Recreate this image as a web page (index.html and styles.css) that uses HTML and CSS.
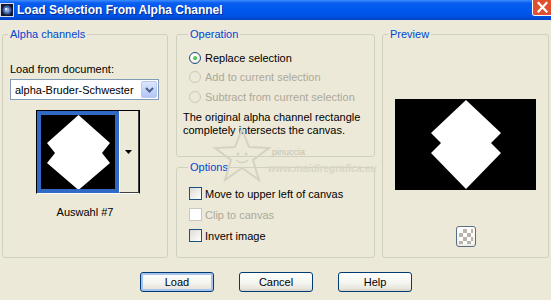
FILE: index.html
```html
<!DOCTYPE html>
<html lang="en">

<head>
  <meta charset="UTF-8">
  <title>Load Selection From Alpha Channel</title>
  <link rel="stylesheet" href="styles.css">
</head>

<body>
  <div class="window">
    <div class="titlebar">
      <svg class="app-icon" width="14" height="14" viewBox="0 0 14 14">
        <rect x="0" y="0" width="14" height="14" fill="#d8dce8"/>
        <rect x="1" y="1" width="12" height="12" fill="#14182a"/>
        <circle cx="7" cy="7" r="4.5" fill="#3e5fa8"/>
        <circle cx="7" cy="7" r="2.5" fill="#8fa6d8"/>
        <circle cx="6" cy="6" r="1" fill="#ffffff"/>
      </svg>
      <div class="title">Load Selection From Alpha Channel</div>
      <div class="close-btn">
        <svg width="18" height="15" viewBox="0 0 18 15">
          <rect width="18" height="15" fill="#e0502e"/>
          <path d="M5.5 3 L13.5 11.5 M13.5 3 L5.5 11.5" stroke="#ffffff" stroke-width="2.2" stroke-linecap="square"/>
        </svg>
      </div>
    </div>

    <div class="dialog">
      <div class="panels">
        <fieldset class="group group-alpha">
          <legend>Alpha channels</legend>
          <div class="field-label">Load from document:</div>
          <div class="combo">
            <span class="combo-text">alpha-Bruder-Schwester</span>
            <span class="combo-btn">
              <svg width="9" height="6" viewBox="0 0 9 6">
                <path d="M1 1 L4.5 4.5 L8 1" fill="none" stroke="#4d6185" stroke-width="2"/>
              </svg>
            </span>
          </div>
          <div class="thumb-picker">
            <div class="thumb">
              <svg width="74" height="74" viewBox="0 0 74 74">
                <polygon points="37.5,0 6,28 14,38 6,48 37.5,75 69,48 61,38 69,28" fill="#ffffff"/>
              </svg>
            </div>
            <div class="thumb-arrow">
              <svg width="7" height="4" viewBox="0 0 7 4">
                <polygon points="0,0 7,0 3.5,4" fill="#000000"/>
              </svg>
            </div>
          </div>
          <div class="thumb-name">Auswahl #7</div>
        </fieldset>

        <div class="middle">
          <fieldset class="group group-operation">
            <legend>Operation</legend>
            <div class="option-row">
              <span class="radio checked"></span>
              <span>Replace selection</span>
            </div>
            <div class="option-row disabled">
              <span class="radio"></span>
              <span>Add to current selection</span>
            </div>
            <div class="option-row disabled">
              <span class="radio"></span>
              <span>Subtract from current selection</span>
            </div>
            <p class="note">The original alpha channel rectangle<br>completely intersects the canvas.</p>
          </fieldset>

          <fieldset class="group group-options">
            <legend>Options</legend>
            <div class="option-row check-row">
              <span class="checkbox"></span>
              <span>Move to upper left of canvas</span>
            </div>
            <div class="option-row check-row disabled">
              <span class="checkbox"></span>
              <span>Clip to canvas</span>
            </div>
            <div class="option-row check-row">
              <span class="checkbox"></span>
              <span>Invert image</span>
            </div>
          </fieldset>
        </div>

        <fieldset class="group group-preview">
          <legend>Preview</legend>
          <div class="preview">
            <svg width="141" height="91" viewBox="0 0 141 91">
              <rect width="141" height="91" fill="#000000"/>
              <polygon points="71,1 36,34 46,44 36,54 71,90 106,54 96,44 106,34" fill="#ffffff"/>
            </svg>
          </div>
          <button class="checker-btn"><span class="checker"></span></button>
        </fieldset>
      </div>

      <div class="buttons">
        <button class="btn default">Load</button>
        <button class="btn">Cancel</button>
        <button class="btn">Help</button>
      </div>
    </div>

    <div class="watermark">
      <svg class="star" width="60" height="58" viewBox="0 0 60 58">
        <polygon points="30,3 37,21 57,22 41,34 47,54 30,42 13,54 19,34 3,22 23,21" fill="none" stroke="#d5d2c1" stroke-width="2"/>
        <circle cx="26" cy="28" r="1.5" fill="#d5d2c1"/>
        <circle cx="34" cy="28" r="1.5" fill="#d5d2c1"/>
        <path d="M24 34 Q30 39 36 34" fill="none" stroke="#d5d2c1" stroke-width="1.5"/>
      </svg>
      <span class="wm-name">pinuccia</span>
      <span class="wm-site">www.maidiregrafica.eu</span>
    </div>
  </div>
</body>

</html>
```

FILE: styles.css
```css
* {
  margin: 0;
  padding: 0;
  box-sizing: border-box;
}

body {
  width: 551px;
  height: 300px;
  overflow: hidden;
  background-color: #ece9d8;
  font-family: "Liberation Sans", Arial, sans-serif;
  font-size: 11px;
  color: #000000;
}

.window {
  position: relative;
  height: 300px;
}

/* title bar */

.titlebar {
  display: flex;
  align-items: center;
  width: 551px;
  height: 20px;
  background: linear-gradient(#3d8cff 0, #0a5ef0 3px, #0058ee 45%, #0052e4 80%, #0442c6 100%);
}

.app-icon {
  flex: none;
}

.title {
  flex: 1 1 auto;
  margin-left: 3px;
  color: #ffffff;
  font-weight: bold;
  font-size: 12px;
  text-shadow: 1px 1px 0 #0a2a8e;
  white-space: nowrap;
}

.close-btn {
  align-self: flex-start;
  flex: none;
  width: 19px;
  height: 16px;
  border-left: 1px solid #ffffff;
  border-bottom: 1px solid #ffffff;
  border-bottom-left-radius: 3px;
  overflow: hidden;
}

.close-btn svg {
  display: block;
}

/* dialog body */

.dialog {
  padding: 8px 2px 0 2px;
}

.panels {
  display: flex;
  height: 230px;
}

.group {
  border: 1px solid #d0d0bf;
  border-radius: 3px;
  min-width: 0;
}

.group legend {
  margin-left: 5px;
  padding: 0 2px;
  color: #0046d5;
  font-size: 11px;
  line-height: 13px;
}

.group-alpha {
  width: 166px;
  display: flex;
  flex-direction: column;
  align-items: center;
}

.middle {
  width: 199px;
  margin: 0 7px 0 8px;
  display: flex;
  flex-direction: column;
  gap: 4px;
}

.group-preview {
  width: 167px;
  display: flex;
  flex-direction: column;
  align-items: center;
}

/* alpha channels */

.field-label {
  align-self: flex-start;
  margin: 21px 0 0 7px;
  line-height: 14px;
}

.combo {
  align-self: flex-start;
  display: flex;
  align-items: center;
  width: 149px;
  height: 21px;
  margin: 3px 0 0 7px;
  padding: 1px;
  background-color: #ffffff;
  border: 1px solid #7f9db9;
}

.combo-text {
  flex: 1;
  padding-left: 3px;
  white-space: nowrap;
}

.combo-btn {
  display: flex;
  align-items: center;
  justify-content: center;
  width: 16px;
  height: 17px;
  border: 1px solid #b9c9ef;
  border-radius: 2px;
  background: linear-gradient(#dce6fd, #c1d3fb 60%, #b2c6f7);
}

.combo-btn svg {
  display: block;
}

.thumb-picker {
  display: flex;
  margin: 10px 0 0 5px;
  border: 1px solid #000000;
  border-bottom-color: #ffffff;
}

.thumb {
  width: 82px;
  height: 82px;
  border: 4px solid #3169c6;
  background-color: #000000;
}

.thumb svg {
  display: block;
}

.thumb-arrow {
  display: flex;
  align-items: center;
  justify-content: center;
  width: 20px;
  background-color: #ece9d8;
  border-left: 1px solid #ffffff;
  border-right: 1px solid #404040;
  border-bottom: 1px solid #404040;
}

.thumb-name {
  margin-top: 11px;
  line-height: 14px;
}

/* operation and options */

.group-operation {
  height: 129px;
  padding: 7px 0 0 6px;
}

.group-options {
  flex: 1;
  padding: 9px 0 0 6px;
}

.option-row {
  display: flex;
  align-items: center;
  gap: 4px;
  height: 19.5px;
  padding-left: 6px;
  white-space: nowrap;
}

.check-row {
  height: 21px;
  gap: 3px;
}

.option-row.disabled {
  color: #aca899;
}

.radio {
  width: 12px;
  height: 12px;
  border: 1px solid #1c5180;
  border-radius: 50%;
  background: radial-gradient(circle at 40% 40%, #ffffff 30%, #dcd9cb);
  display: flex;
  align-items: center;
  justify-content: center;
}

.radio.checked::after {
  content: "";
  width: 4px;
  height: 4px;
  border-radius: 50%;
  background: radial-gradient(circle at 35% 35%, #6fd86f, #21a121);
}

.disabled .radio {
  border-color: #cac8bb;
  background: #ece9d8;
}

.checkbox {
  width: 13px;
  height: 13px;
  border: 1px solid #1c5180;
  background: linear-gradient(135deg, #dcdbd5, #ffffff);
}

.disabled .checkbox {
  border-color: #cac8bb;
  background: #ffffff;
}

.note {
  margin-top: 4px;
  line-height: 13px;
}

/* preview */

.preview {
  margin-top: 58px;
}

.preview svg {
  display: block;
}

.checker-btn {
  width: 20px;
  height: 21px;
  margin-top: 36px;
  padding: 2px;
  border: 1px solid #5a6e84;
  border-radius: 3px;
  background: linear-gradient(#ffffff, #ecebe6);
}

.checker {
  display: block;
  width: 14px;
  height: 15px;
  background: repeating-conic-gradient(#b9b5aa 0 25%, #ffffff 0 50%) 0 0 / 8px 8px;
}

/* buttons */

.buttons {
  display: flex;
  justify-content: center;
  gap: 25px;
  margin-top: 14px;
  padding-left: 1px;
}

.btn {
  width: 74px;
  height: 20px;
  border: 1px solid #003c74;
  border-radius: 3px;
  background: linear-gradient(#ffffff, #f4f4f0 55%, #e8e6dd 85%, #d6d0c5);
  font-family: "Liberation Sans", Arial, sans-serif;
  font-size: 11px;
  color: #000000;
}

.btn.default {
  box-shadow: inset 0 0 0 2px #a9c3ef;
}

/* faint watermark over the dialog */

.watermark {
  position: absolute;
  left: 212px;
  top: 126px;
  width: 170px;
  height: 50px;
  pointer-events: none;
}

.star {
  position: absolute;
  left: 0;
  top: 0;
}

.wm-name {
  position: absolute;
  left: 60px;
  top: 21px;
  font-size: 9px;
  color: #c4c1b0;
}

.wm-site {
  position: absolute;
  left: 56px;
  top: 37px;
  font-size: 10px;
  font-weight: bold;
  font-style: italic;
  color: #d9d6c5;
  white-space: nowrap;
}
```
